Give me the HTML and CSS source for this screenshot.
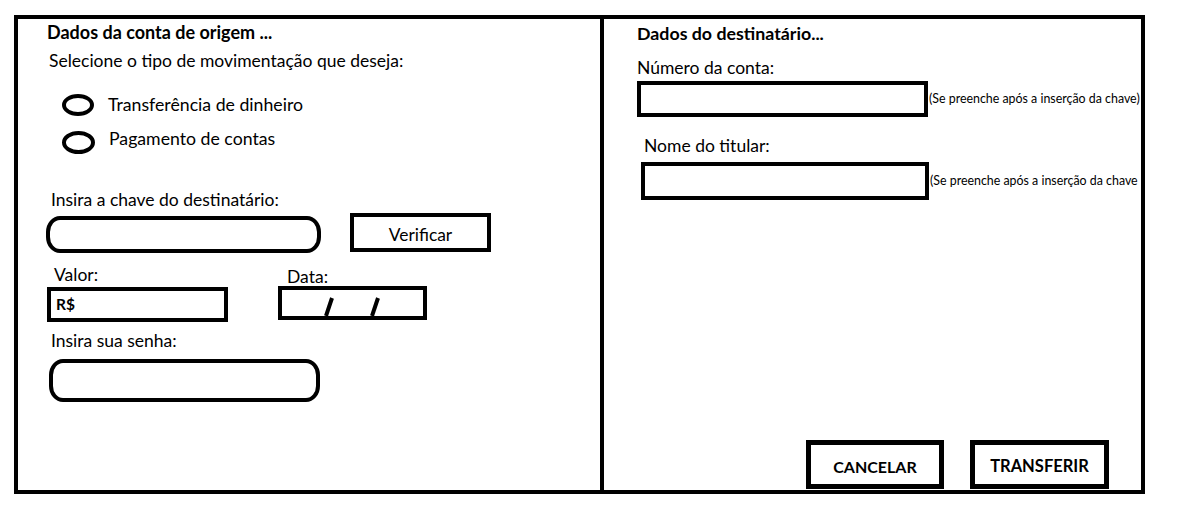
FILE: index.html
```html
<!DOCTYPE html>
<html lang="pt-BR">
<head>
    <meta charset="UTF-8">
    <meta name="viewport" content="width=device-width, initial-scale=1.0">
    <title>Movimentação</title>
    <link rel="stylesheet" href="styles.css">
</head>
<body>
    <div class="frame">
        <!-- conta de origem -->
        <div class="panel panel-left">
            <h2 class="title">Dados da conta de origem ...</h2>
            <p class="subtitle">Selecione o tipo de movimentação que deseja:</p>

            <div class="radio-row first">
                <span class="radio"></span>
                <span class="radio-label">Transferência de dinheiro</span>
            </div>
            <div class="radio-row second">
                <span class="radio wide"></span>
                <span class="radio-label">Pagamento de contas</span>
            </div>

            <label class="label label-key">Insira a chave do destinatário:</label>
            <div class="key-row">
                <div class="pill pill-key"></div>
                <button class="box-btn verify">Verificar</button>
            </div>

            <div class="value-row">
                <div class="field">
                    <label class="label label-valor">Valor:</label>
                    <div class="box box-valor">R$</div>
                </div>
                <div class="field">
                    <label class="label label-data">Data:</label>
                    <div class="box box-data">
                        <svg width="141" height="26" viewBox="0 0 141 26">
                            <line x1="44" y1="26" x2="50" y2="8" stroke="#000" stroke-width="4"/>
                            <line x1="90" y1="26" x2="96" y2="8" stroke="#000" stroke-width="4"/>
                        </svg>
                    </div>
                </div>
            </div>

            <label class="label label-pass">Insira sua senha:</label>
            <div class="pill pill-pass"></div>
        </div>

        <!-- destinatário -->
        <div class="panel panel-right">
            <h2 class="title title-right">Dados do destinatário...</h2>

            <label class="label label-conta">Número da conta:</label>
            <div class="info-row">
                <div class="box box-conta"></div>
                <span class="note">(Se preenche após a inserção da chave)</span>
            </div>

            <label class="label label-nome">Nome do titular:</label>
            <div class="info-row row-nome">
                <div class="box box-nome"></div>
                <span class="note">(Se preenche após a inserção da chave</span>
            </div>

            <div class="actions">
                <button class="box-btn action">CANCELAR</button>
                <button class="box-btn action transfer">TRANSFERIR</button>
            </div>
        </div>
    </div>
</body>
</html>
```

FILE: styles.css
```css
* {
    box-sizing: border-box;
}

body {
    margin: 0;
    background: #fff;
    font-family: Lato, "Liberation Sans", sans-serif;
    color: #000;
}

.frame {
    display: flex;
    width: 1131px;
    height: 479px;
    margin: 15px 0 0 14px;
    border: 4px solid #000;
    overflow: hidden;
}

.panel {
    display: flex;
    flex-direction: column;
    align-items: flex-start;
    overflow: hidden;
}

.panel-left {
    width: 586px;
    border-right: 4px solid #000;
}

.panel-right {
    flex: 1;
}

.title {
    margin: 3px 0 0 29px;
    font-size: 18px;
    font-weight: 700;
    line-height: 20px;
}

.title-right {
    margin: 4px 0 0 33px;
    font-size: 17.8px;
}

.subtitle {
    margin: 9px 0 0 31px;
    font-size: 17.5px;
    line-height: 20px;
}

.label {
    display: block;
    font-size: 17.5px;
    line-height: 20px;
}

/* radios desenhados a mão */
.radio-row {
    display: flex;
    align-items: center;
    margin: 23px 0 0 44px;
}

.radio-row.second {
    margin-top: 15px;
}

.radio {
    width: 32px;
    height: 22px;
    border: 4px solid #000;
    border-radius: 50%;
}

.radio.wide {
    width: 33px;
    height: 23px;
}

.radio-label {
    margin-left: 14px;
    font-size: 17.7px;
    line-height: 20px;
}

.radio-row.second .radio-label {
    margin-top: -8px;
}

.label-key {
    margin: 36px 0 0 33px;
}

.key-row {
    display: flex;
    align-items: flex-start;
    margin: 3px 0 0 28px;
}

.pill {
    border: 4px solid #000;
    border-radius: 14px / 16px;
}

.pill-key {
    width: 275px;
    height: 37px;
    margin-top: 3px;
}

.pill-pass {
    width: 271px;
    height: 43px;
    margin: 8px 0 0 31px;
}

.box {
    border: 4px solid #000;
}

.box-btn {
    border: 4px solid #000;
    background: #fff;
    font-family: inherit;
    color: #000;
    padding: 0;
    cursor: pointer;
}

.verify {
    width: 141px;
    height: 39px;
    margin-left: 29px;
    padding-top: 4px;
    font-size: 17.4px;
}

.value-row {
    display: flex;
    gap: 50px;
    margin: 12px 0 0 29px;
}

.field {
    display: flex;
    flex-direction: column;
}

.label-valor {
    margin-left: 7px;
}

.label-data {
    margin-left: 9px;
    padding-top: 3px;
    line-height: 18px;
}

.box-valor {
    width: 181px;
    height: 35px;
    margin-top: 2px;
    padding-left: 5px;
    font-size: 15.5px;
    font-weight: 700;
    line-height: 27px;
}

.box-data {
    width: 149px;
    height: 34px;
}

.box-data svg {
    display: block;
}

.label-pass {
    margin: 9px 0 0 33px;
}

/* lado direito */
.label-conta {
    margin: 15px 0 0 33px;
}

.info-row {
    display: flex;
    align-items: center;
    margin: 3px 0 0 33px;
    white-space: nowrap;
}

.box-conta {
    width: 291px;
    height: 36px;
}

.note {
    margin-left: 1px;
    font-size: 12.4px;
    line-height: 14px;
}

.label-nome {
    margin: 19px 0 0 40px;
}

.row-nome {
    margin: 6px 0 0 37px;
}

.box-nome {
    width: 288px;
    height: 38px;
}

.actions {
    display: flex;
    gap: 26px;
    margin: auto 0 1px 202px;
}

.action {
    width: 138px;
    height: 49px;
    border-width: 5px;
    font-size: 16px;
    font-weight: 700;
    padding-top: 4px;
}

.transfer {
    width: 139px;
    padding-top: 2px;
    font-size: 16.5px;
}
```
